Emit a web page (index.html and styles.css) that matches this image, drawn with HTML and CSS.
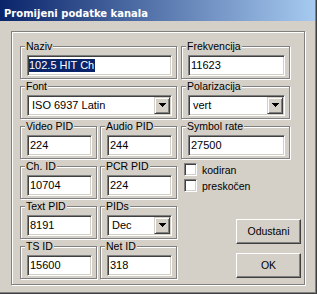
FILE: index.html
```html
<!DOCTYPE html>
<html>
<head>
<meta charset="utf-8">
<link rel="stylesheet" href="styles.css">
</head>
<body>
<div class="window">
  <div class="titlebar">Promijeni podatke kanala</div>
  <div class="frame">
    <div class="col-left">
      <div class="group wide"><span class="legend">Naziv</span><div class="edit"><span class="sel">102.5 HIT Ch</span></div></div>
      <div class="group wide"><span class="legend">Font</span><div class="combo"><span class="combo-text">ISO 6937 Latin</span><span class="drop"><svg width="7" height="4" viewBox="0 0 7 4" shape-rendering="crispEdges"><path d="M0 0h7v1H0zM1 1h5v1H1zM2 2h3v1H2zM3 3h1v1H3z"/></svg></span></div></div>
      <div class="pair">
        <div class="group"><span class="legend">Video PID</span><div class="edit">224</div></div>
        <div class="group"><span class="legend">Audio PID</span><div class="edit">244</div></div>
      </div>
      <div class="pair">
        <div class="group"><span class="legend">Ch. ID</span><div class="edit">10704</div></div>
        <div class="group"><span class="legend">PCR PID</span><div class="edit">224</div></div>
      </div>
      <div class="pair">
        <div class="group"><span class="legend">Text PID</span><div class="edit">8191</div></div>
        <div class="group"><span class="legend">PIDs</span><div class="combo"><span class="combo-text">Dec</span><span class="drop"><svg width="7" height="4" viewBox="0 0 7 4" shape-rendering="crispEdges"><path d="M0 0h7v1H0zM1 1h5v1H1zM2 2h3v1H2zM3 3h1v1H3z"/></svg></span></div></div>
      </div>
      <div class="pair">
        <div class="group"><span class="legend">TS ID</span><div class="edit">15600</div></div>
        <div class="group"><span class="legend">Net ID</span><div class="edit">318</div></div>
      </div>
    </div>
    <div class="col-right">
      <div class="group"><span class="legend">Frekvencija</span><div class="edit">11623</div></div>
      <div class="group"><span class="legend">Polarizacija</span><div class="combo"><span class="combo-text">vert</span><span class="drop"><svg width="7" height="4" viewBox="0 0 7 4" shape-rendering="crispEdges"><path d="M0 0h7v1H0zM1 1h5v1H1zM2 2h3v1H2zM3 3h1v1H3z"/></svg></span></div></div>
      <div class="group"><span class="legend">Symbol rate</span><div class="edit">27500</div></div>
      <div class="checks">
        <div class="check"><span class="box"></span><span>kodiran</span></div>
        <div class="check"><span class="box"></span><span>preskočen</span></div>
      </div>
      <div class="buttons">
        <div class="btn">Odustani</div>
        <div class="btn">OK</div>
      </div>
    </div>
  </div>
</div>
</body>
</html>
```

FILE: styles.css
```css
* { box-sizing: border-box; }
html, body { margin: 0; padding: 0; }
body {
  width: 317px;
  height: 294px;
  overflow: hidden;
  background: #D4D0C8;
  font-family: "Liberation Sans", Arial, sans-serif;
  color: #000;
}
.window {
  width: 317px;
  height: 294px;
  background: #D4D0C8;
  border-right: 1px solid #404040;
  border-bottom: 1px solid #404040;
  box-shadow: inset -1px -1px #808080;
  padding-right: 1px;
  display: flex;
  flex-direction: column;
}
.titlebar {
  height: 21px;
  flex: none;
  background: linear-gradient(to right, #0A246A, #A6CAF0);
  color: #fff;
  font-family: "DejaVu Sans", sans-serif;
  font-weight: bold;
  font-size: 10px;
  line-height: 13px;
  padding: 7px 0 0 4px;
  white-space: nowrap;
}
.frame {
  margin: 10px 0 0 11px;
  width: 294px;
  height: 254px;
  border: 1px solid #808080;
  box-shadow: inset 1px 1px #fff, 1px 1px #fff;
  padding: 14px 0 0 8px;
  display: flex;
  gap: 4px;
}
.col-left {
  width: 157px;
  display: flex;
  flex-direction: column;
  gap: 7px;
}
.pair { display: flex; gap: 3px; }
.col-right {
  width: 120px;
  display: flex;
  flex-direction: column;
}
.group {
  position: relative;
  height: 33px;
  border: 1px solid #808080;
  box-shadow: inset 1px 1px #fff, 1px 1px #fff;
  padding: 8px 4px 2px 6px;
}
.group.wide { width: 157px; }
.pair .group { width: 77px; }
.col-right .group { width: 109px; }
.col-right .group + .group { margin-top: 7px; }
.legend {
  position: absolute;
  left: 4px;
  top: -7px;
  padding: 0 1px;
  background: #D4D0C8;
  font-size: 10.5px;
  line-height: 12px;
  white-space: nowrap;
}
.edit {
  height: 21px;
  background: #fff;
  border: 1px solid;
  border-color: #808080 #fff #fff #808080;
  box-shadow: inset 1px 1px #404040, inset -1px -1px #D4D0C8;
  padding: 3px 2px 0 2px;
  font-size: 11px;
  line-height: 13px;
  white-space: nowrap;
  overflow: hidden;
}
.sel {
  display: inline-block;
  margin-left: -1px;
  padding: 0 1px 0 0;
  background: #0A246A;
  color: #fff;
}
.combo {
  height: 21px;
  background: #fff;
  border: 1px solid;
  border-color: #808080 #fff #fff #808080;
  box-shadow: inset 1px 1px #404040, inset -1px -1px #D4D0C8;
  padding: 1px;
  display: flex;
}
.combo-text {
  flex: 1;
  padding: 2px 0 0 3px;
  font-size: 11px;
  line-height: 13px;
  white-space: nowrap;
  overflow: hidden;
}
.drop {
  width: 16px;
  height: 17px;
  flex: none;
  background: #D4D0C8;
  border: 1px solid;
  border-color: #D4D0C8 #404040 #404040 #D4D0C8;
  box-shadow: inset 1px 1px #fff, inset -1px -1px #808080;
  display: flex;
  align-items: center;
  justify-content: center;
  padding-bottom: 1px;
}
.drop svg { display: block; fill: #000; }
.checks {
  margin-top: 4px;
  padding-left: 3px;
  display: flex;
  flex-direction: column;
  gap: 3px;
}
.check {
  display: flex;
  align-items: center;
  gap: 5px;
  height: 13px;
  font-size: 10.5px;
  line-height: 12px;
}
.box {
  width: 13px;
  height: 13px;
  flex: none;
  background: #fff;
  border: 1px solid;
  border-color: #808080 #fff #fff #808080;
  box-shadow: inset 1px 1px #404040, inset -1px -1px #D4D0C8;
}
.buttons {
  margin-top: 27px;
  display: flex;
  flex-direction: column;
  align-items: flex-end;
  gap: 9px;
}
.btn {
  width: 65px;
  height: 25px;
  background: #D4D0C8;
  border: 1px solid;
  border-color: #fff #404040 #404040 #fff;
  box-shadow: inset -1px -1px #808080;
  font-size: 10.5px;
  line-height: 21px;
  text-align: center;
  padding-top: 1px;
}
```
